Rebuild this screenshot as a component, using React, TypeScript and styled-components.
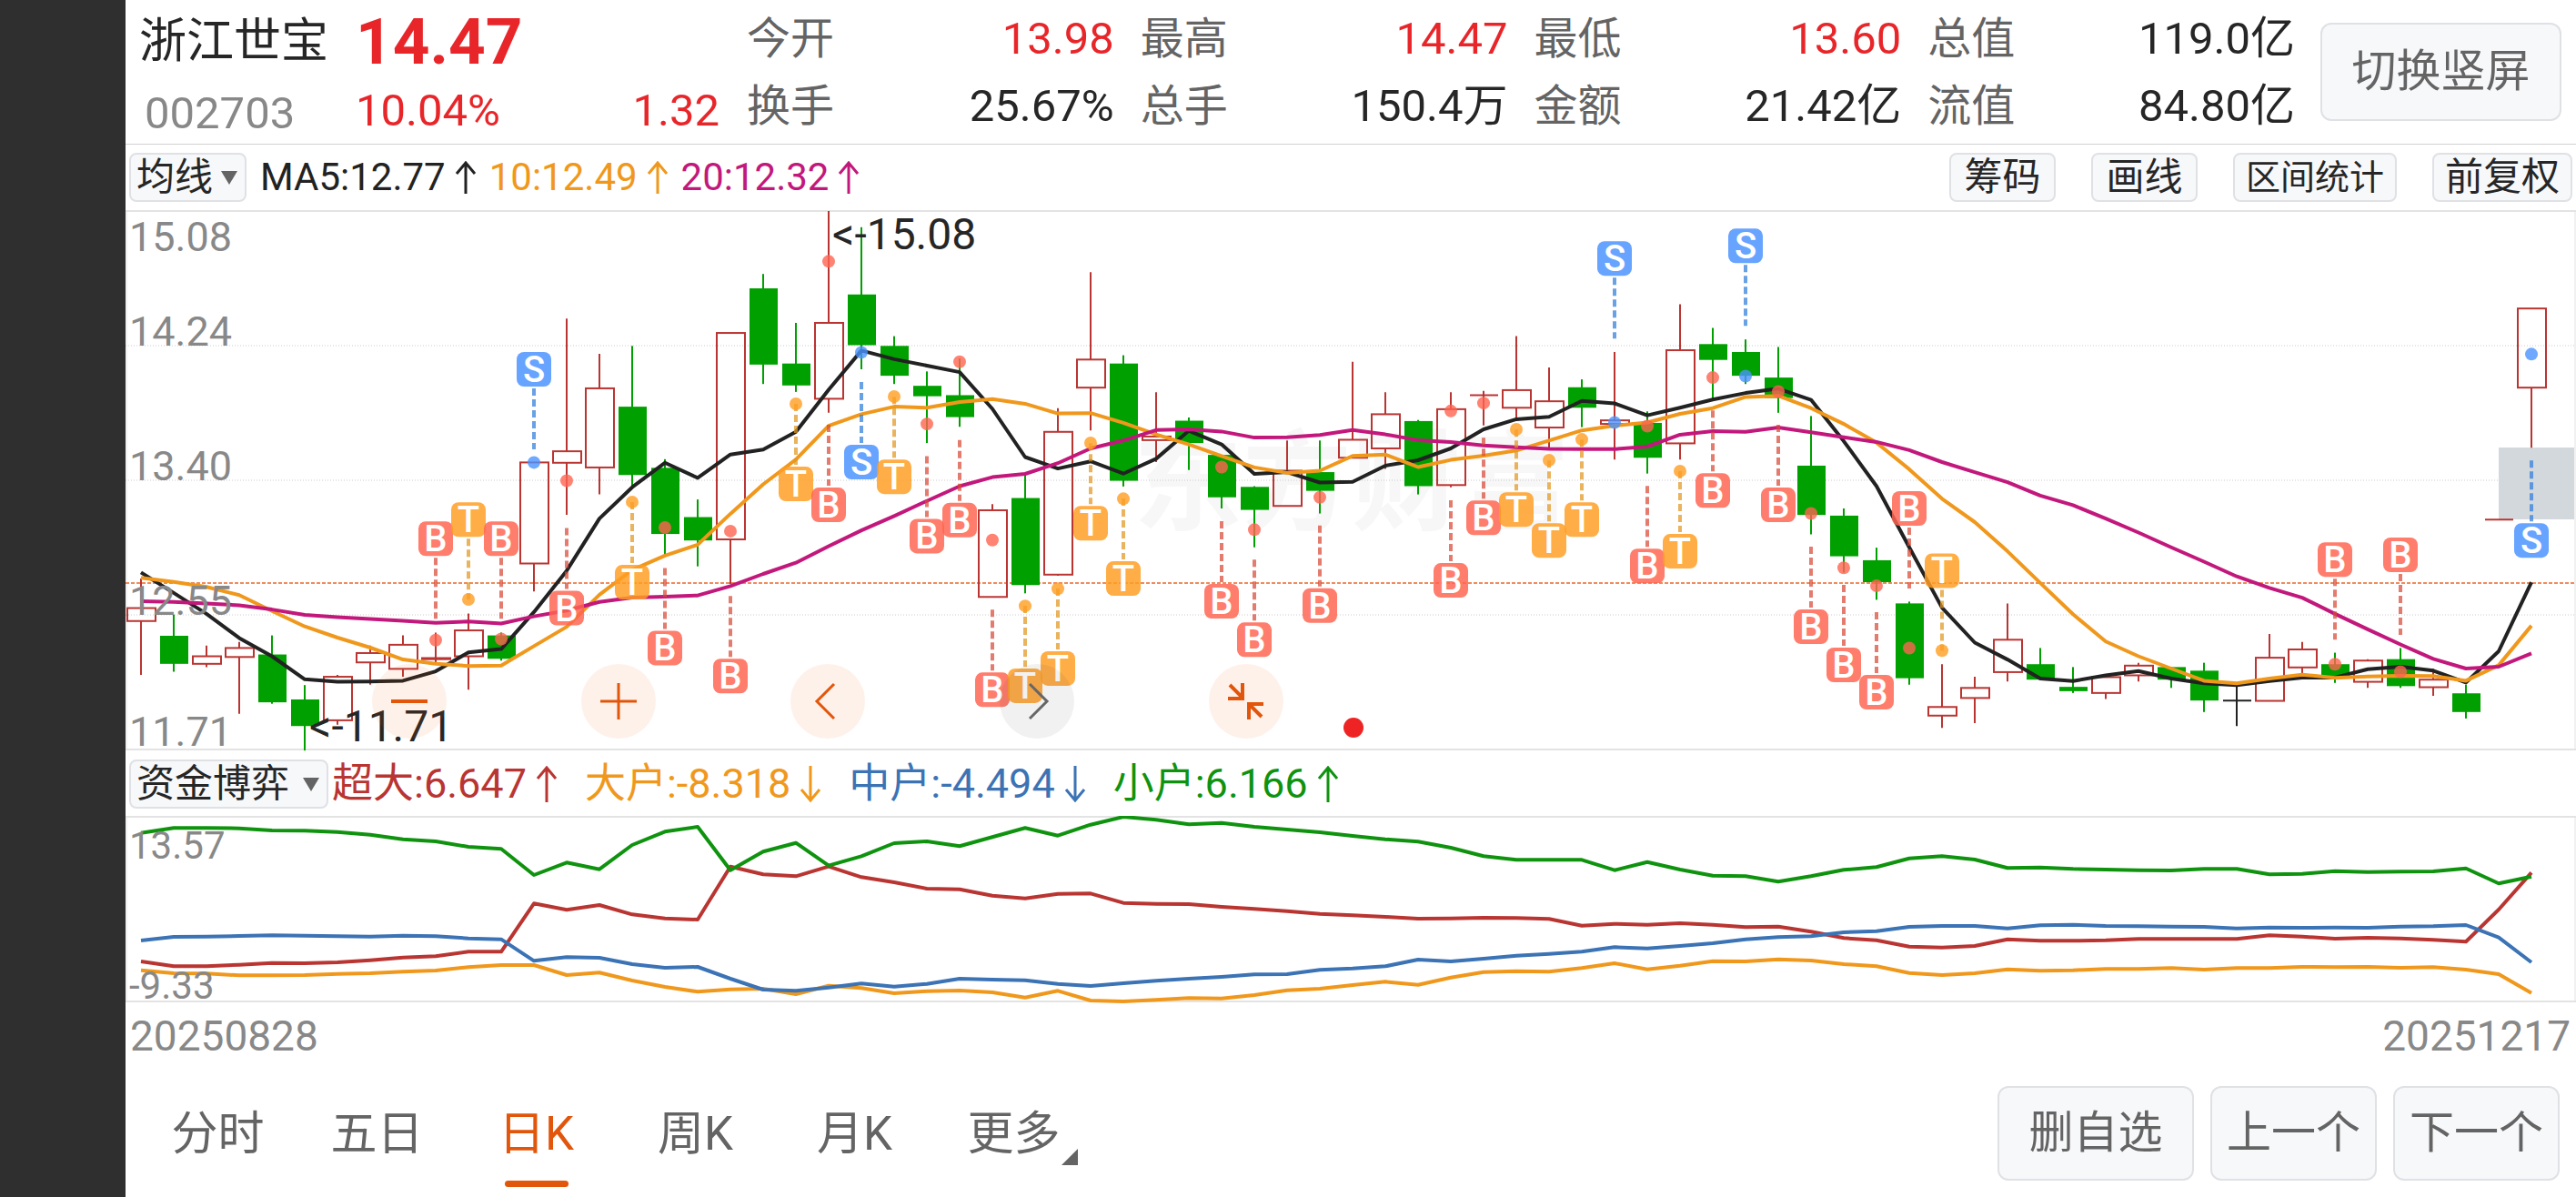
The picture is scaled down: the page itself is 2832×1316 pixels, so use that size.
import React, { useState } from 'react';
import styled, { createGlobalStyle } from 'styled-components';

const FONT = "Roboto, 'Noto Sans CJK SC', sans-serif";

const C = {
  ink: '#262626',
  mute: '#646464',
  axis: '#888888',
  red: '#e8262a',
  orange: '#e2560c',
  rule: '#e3e3e3',
  fill: '#f7f8fa',
  edge: '#dfe1e5',
  up: '#b93532',
  down: '#00a000',
  ma5: '#222222',
  ma10: '#f0981c',
  ma20: '#c2187c',
  blue: '#3b73b5',
  green: '#0f930f',
};

const GlobalStyle = createGlobalStyle`
  *, *::before, *::after { box-sizing: border-box; }
  body { margin: 0; background: #fff; font-family: ${FONT}; color: ${C.ink}; }
  button, select { font-family: inherit; margin: 0; cursor: pointer; }
`;

/* ---------- shell ---------- */

const Shell = styled.div`
  display: grid;
  grid-template-columns: 138px minmax(0, 1fr);
  min-height: 100vh;
`;
const Gutter = styled.div`
  background: #2f2f2f;
`;
const Main = styled.main`
  display: flex;
  flex-direction: column;
`;

/* ---------- header ---------- */

const Header = styled.header`
  display: flex;
  align-items: flex-start;
  padding: 6px 16px 0 15px;
  border-bottom: 1px solid #d2d2d2;
`;
const Identity = styled.div`
  display: grid;
  grid-template-columns: 238px minmax(0, 1fr);
  grid-template-rows: 80px 72px;
  align-items: center;
  width: 638px;
  flex: none;
`;
const Name = styled.h1`
  margin: 0;
  font-size: 52px;
  line-height: 76px;
  font-weight: 400;
`;
const Price = styled.strong`
  font-size: 71px;
  line-height: 76px;
  font-weight: 700;
  color: ${C.red};
`;
const Code = styled.span`
  padding: 6px 0 0 6px;
  font-size: 49px;
  line-height: 66px;
  color: ${C.axis};
`;
const Change = styled.div`
  display: flex;
  justify-content: space-between;
  font-size: 49px;
  line-height: 66px;
  color: ${C.red};
`;
const Quotes = styled.dl`
  flex: 1;
  display: grid;
  grid-template-columns: repeat(4, minmax(0, 1fr));
  column-gap: 29px;
  margin: 0 28px 0 30px;
`;
const Quote = styled.div`
  display: flex;
  justify-content: space-between;
  font-size: 48px;
  line-height: 74px;
  white-space: nowrap;
`;
const Term = styled.dt`
  color: ${C.mute};
`;
const Value = styled.dd<{ $up?: boolean }>`
  margin: 0;
  font-size: 49px;
  color: ${(p) => (p.$up ? C.red : C.ink)};
`;
const BigButton = styled.button<{ $width: number; $height: number }>`
  width: ${(p) => p.$width}px;
  height: ${(p) => p.$height}px;
  padding: 0;
  flex: none;
  border: 2px solid ${C.edge};
  border-radius: 12px;
  background: ${C.fill};
  color: ${C.mute};
  font-size: 49px;
  line-height: 72px;
  white-space: nowrap;
`;
const SwitchSlot = styled.div`
  padding-top: 19px;
`;

/* ---------- toolbars ---------- */

const Toolbar = styled.div`
  display: flex;
  align-items: center;
  height: 71px;
  padding: 0 4px;
`;
const Picker = styled.div`
  position: relative;
  flex: none;
`;
const PickerSelect = styled.select<{ $room: number }>`
  appearance: none;
  display: block;
  height: 54px;
  padding: 0 ${(p) => p.$room}px 0 6px;
  border: 2px solid ${C.edge};
  border-radius: 8px;
  background: ${C.fill};
  color: ${C.ink};
  font-size: 42px;
  line-height: 50px;
`;
const Caret = styled.svg`
  position: absolute;
  right: 10px;
  top: 20px;
  width: 18px;
  height: 15px;
  pointer-events: none;
`;
const Legend = styled.ul<{ $size: number; $gap: number; $lead: number }>`
  display: flex;
  gap: ${(p) => p.$gap}px;
  margin: 0 auto 0 0;
  padding: 0 0 0 ${(p) => p.$lead}px;
  list-style: none;
  font-size: ${(p) => p.$size}px;
  line-height: 54px;
  white-space: nowrap;
`;
const LegendItem = styled.li<{ $color: string }>`
  display: flex;
  align-items: center;
  gap: 10px;
  color: ${(p) => p.$color};
`;
const Tools = styled.div`
  display: flex;
  gap: 39px;
`;
const Tool = styled.button<{ $small?: boolean }>`
  min-width: 117px;
  height: 54px;
  padding: 0 12px;
  border: 2px solid ${C.edge};
  border-radius: 8px;
  background: ${C.fill};
  color: ${C.ink};
  font-size: ${(p) => (p.$small ? 38 : 42)}px;
  line-height: 50px;
  white-space: nowrap;
`;

/* ---------- charts ---------- */

const Plot = styled.section`
  position: relative;
`;
const Canvas = styled.svg`
  display: block;
  width: 100%;
  height: auto;
  font-family: ${FONT};
`;
const Controls = styled.div`
  position: absolute;
  left: 271px;
  bottom: 14px;
  display: flex;
  align-items: center;
  gap: 148px;
`;
const Round = styled.button<{ $idle?: boolean }>`
  display: grid;
  place-items: center;
  width: 82px;
  height: 82px;
  padding: 0;
  border: 0;
  border-radius: 50%;
  background: ${(p) => (p.$idle ? 'rgba(60, 60, 60, 0.07)' : 'rgba(245, 100, 20, 0.09)')};
  color: ${(p) => (p.$idle ? '#666666' : C.orange)};
`;
const Dates = styled.div`
  display: flex;
  justify-content: space-between;
  padding: 0 6px 0 5px;
  font-size: 46px;
  line-height: 72px;
  color: ${C.axis};
`;

/* ---------- footer ---------- */

const Footer = styled.footer`
  flex: 1;
  display: flex;
  align-items: center;
  justify-content: space-between;
  min-height: 141px;
  padding: 0 18px 0 14px;
`;
const Tabs = styled.nav`
  display: flex;
`;
const Tab = styled.button<{ $on: boolean }>`
  position: relative;
  width: 175px;
  height: 118px;
  padding: 2px 0 0;
  border: 0;
  background: none;
  color: ${(p) => (p.$on ? C.orange : C.mute)};
  font-size: 51px;
  line-height: 72px;
  &::after {
    content: '';
    position: absolute;
    left: 50%;
    bottom: 0;
    width: 70px;
    height: 7px;
    margin-left: -35px;
    border-radius: 4px;
    background: ${(p) => (p.$on ? C.orange : 'transparent')};
  }
`;
const Corner = styled.svg`
  position: absolute;
  right: 17px;
  bottom: 24px;
  width: 18px;
  height: 18px;
`;
const Actions = styled.div`
  display: flex;
  gap: 18px;
`;

/* ---------- data ---------- */

const quotes: { term: string; value: string; up?: boolean }[] = [
  { term: '今开', value: '13.98', up: true },
  { term: '最高', value: '14.47', up: true },
  { term: '最低', value: '13.60', up: true },
  { term: '总值', value: '119.0亿' },
  { term: '换手', value: '25.67%' },
  { term: '总手', value: '150.4万' },
  { term: '金额', value: '21.42亿' },
  { term: '流值', value: '84.80亿' },
];

type Kind = 'u' | 'd' | 'x';
/* kind, body top, body bottom, high, low: in axis ticks counted downwards */
const candles: [Kind, number, number, number, number][] = [
  ['u', 1134, 1170, 1052, 1320], ['d', 1211, 1289, 1152, 1311], ['u', 1268, 1289, 1238, 1298],
  ['u', 1245, 1270, 1228, 1428], ['d', 1263, 1396, 1210, 1400], ['d', 1388, 1462, 1348, 1530],
  ['u', 1325, 1446, 1320, 1458], ['u', 1259, 1285, 1238, 1347], ['u', 1236, 1303, 1210, 1325],
  ['u', 1273, 1276, 1202, 1285], ['u', 1196, 1268, 1149, 1361], ['d', 1210, 1275, 1202, 1280],
  ['u', 729, 1010, 729, 1088], ['u', 698, 730, 329, 875], ['u', 523, 743, 427, 818],
  ['d', 574, 764, 405, 800], ['d', 744, 928, 720, 988], ['d', 881, 946, 832, 1018],
  ['u', 369, 943, 369, 1067], ['d', 245, 457, 205, 511], ['d', 454, 515, 341, 533],
  ['u', 341, 552, 30, 591], ['d', 262, 403, 75, 470], ['d', 405, 488, 378, 511],
  ['d', 516, 545, 476, 675], ['d', 542, 603, 440, 630], ['u', 862, 1103, 845, 1103],
  ['d', 828, 1070, 765, 1093], ['u', 644, 1041, 578, 1044], ['u', 443, 521, 200, 640],
  ['d', 454, 780, 431, 796], ['u', 657, 667, 534, 728], ['d', 613, 675, 604, 750],
  ['d', 708, 826, 708, 857], ['d', 797, 861, 795, 965], ['u', 752, 850, 668, 850],
  ['d', 756, 808, 668, 871], ['u', 666, 716, 449, 716], ['u', 595, 690, 534, 747],
  ['d', 614, 795, 611, 818], ['u', 581, 792, 534, 798], ['u', 542, 542, 530, 626],
  ['u', 528, 577, 378, 605], ['u', 559, 632, 465, 688], ['d', 520, 577, 498, 631],
  ['u', 612, 622, 422, 721], ['d', 619, 716, 587, 760], ['u', 417, 676, 289, 721],
  ['d', 400, 444, 355, 552], ['d', 422, 488, 387, 511], ['d', 493, 550, 408, 591],
  ['d', 738, 875, 600, 929], ['d', 877, 990, 857, 1035], ['d', 1001, 1062, 966, 1111],
  ['d', 1121, 1329, 1116, 1347], ['u', 1409, 1433, 1290, 1467], ['u', 1356, 1384, 1325, 1454],
  ['u', 1222, 1312, 1121, 1338], ['d', 1290, 1333, 1245, 1333], ['d', 1353, 1365, 1298, 1370],
  ['u', 1326, 1370, 1320, 1387], ['u', 1294, 1321, 1286, 1338], ['d', 1298, 1333, 1298, 1356],
  ['d', 1308, 1391, 1286, 1423], ['x', 1391, 1391, 1350, 1462], ['u', 1272, 1392, 1206, 1392],
  ['u', 1249, 1299, 1228, 1320], ['d', 1290, 1325, 1258, 1342], ['u', 1280, 1339, 1276, 1356],
  ['d', 1276, 1351, 1245, 1356], ['u', 1333, 1354, 1303, 1378], ['d', 1371, 1423, 1347, 1441],
  ['u', 888, 888, 888, 888], ['u', 301, 521, 301, 688],
];

const ma5 = [
  1035, 1092, 1150, 1217, 1268, 1332, 1339, 1338, 1336, 1310, 1257, 1248, 1145, 1030, 885, 798, 730, 772, 707,
  693, 644, 527, 418, 442, 460, 478, 580, 714, 746, 726, 760, 719, 641, 679, 761, 756, 785, 783, 738, 723, 690,
  637, 609, 602, 558, 565, 598, 577, 554, 536, 524, 555, 670, 795, 965, 1133, 1230, 1277, 1330, 1337, 1321, 1309,
  1330, 1343, 1348, 1337, 1327, 1327, 1304, 1297, 1308, 1341, 1254, 1062,
];
const ma10 = [
  1050, 1061, 1075, 1098, 1142, 1185, 1216, 1244, 1277, 1289, 1295, 1294, 1240, 1186, 1097, 1028, 988, 958, 872,
  790, 721, 627, 595, 574, 577, 561, 553, 566, 593, 592, 619, 651, 679, 711, 743, 758, 752, 711, 707, 742, 722,
  710, 696, 668, 640, 627, 618, 594, 578, 547, 544, 578, 622, 674, 748, 830, 895, 976, 1064, 1151, 1227, 1268,
  1302, 1336, 1343, 1330, 1319, 1328, 1324, 1322, 1323, 1336, 1293, 1183,
];
const ma20 = [
  1115, 1117, 1121, 1126, 1138, 1153, 1159, 1164, 1169, 1175, 1171, 1177, 1157, 1141, 1117, 1105, 1102, 1099,
  1073, 1039, 1008, 962, 918, 878, 836, 795, 770, 761, 731, 690, 668, 639, 637, 643, 660, 659, 653, 639, 651, 667,
  672, 682, 687, 691, 692, 692, 685, 652, 642, 644, 632, 645, 659, 672, 695, 728, 756, 784, 821, 848, 885, 924,
  965, 1005, 1046, 1078, 1105, 1150, 1193, 1235, 1275, 1302, 1297, 1260,
];

type Mark = 'B' | 'S' | 'T';
/* candle index, mark, badge centre, dot centre, stem hangs below the badge */
const signals: [number, Mark, number, number, boolean?][] = [
  [9, 'B', 941, 1223, true], [10, 'T', 888, 1110, true], [11, 'B', 941, 1220, true], [12, 'S', 470, 729, true],
  [13, 'B', 1134, 780], [15, 'T', 1062, 839], [16, 'B', 1245, 910], [18, 'B', 1323, 920], [20, 'T', 789, 566],
  [21, 'B', 847, 170], [22, 'S', 728, 423], [23, 'T', 769, 546], [24, 'B', 934, 622], [25, 'B', 889, 449],
  [26, 'B', 1361, 945], [27, 'T', 1350, 1128], [28, 'T', 1302, 1080], [29, 'T', 898, 675], [30, 'T', 1052, 830],
  [33, 'B', 1115, 742], [34, 'B', 1222, 916], [36, 'B', 1127, 826], [40, 'B', 1057, 586], [41, 'B', 883, 564],
  [42, 'T', 860, 637], [43, 'T', 946, 723], [44, 'T', 888, 665], [45, 'S', 162, 618, true], [46, 'B', 1017, 628],
  [47, 'T', 976, 753], [48, 'B', 807, 493], [49, 'S', 127, 489, true], [50, 'B', 847, 532], [51, 'B', 1186, 871],
  [52, 'B', 1292, 1022], [53, 'B', 1368, 1072], [54, 'B', 857, 1245, true], [55, 'T', 1030, 1252, true],
  [67, 'B', 999, 1290, true], [69, 'B', 986, 1311, true], [73, 'S', 946, 428],
];
const markFill: Record<Mark, string> = { B: '#ff6450', T: '#ff9d22', S: '#4a93ff' };
const markStem: Record<Mark, string> = { B: '#d84a36', T: '#e2951f', S: '#2f7ddb' };

const small = [
  287, 271, 271, 272, 279, 280, 284, 293, 308, 315, 333, 340, 426, 385, 407, 327, 283, 267, 410, 349, 320, 395,
  364, 321, 315, 331, 301, 271, 296, 260, 234, 244, 259, 254, 267, 276, 285, 297, 308, 316, 336, 364, 376, 376,
  376, 410, 383, 408, 428, 430, 448, 430, 409, 400, 371, 364, 375, 403, 401, 406, 408, 410, 411, 406, 406, 424,
  422, 413, 416, 415, 414, 404, 454, 431,
];
const huge = [
  711, 727, 727, 722, 716, 717, 714, 707, 698, 694, 679, 679, 520, 541, 525, 556, 569, 573, 398, 424, 430, 398,
  433, 450, 471, 473, 494, 503, 488, 487, 518, 521, 522, 531, 538, 545, 554, 559, 564, 570, 569, 567, 568, 571,
  593, 587, 590, 585, 590, 598, 596, 613, 634, 641, 662, 665, 660, 638, 643, 643, 641, 637, 637, 637, 637, 625,
  629, 636, 633, 635, 640, 646, 540, 418,
];
const middle = [
  642, 630, 629, 627, 625, 626, 628, 629, 626, 628, 635, 638, 709, 697, 699, 720, 732, 729, 768, 804, 808, 797,
  784, 794, 785, 768, 771, 773, 785, 792, 783, 775, 768, 762, 754, 753, 739, 734, 727, 705, 711, 702, 692, 686,
  679, 664, 668, 660, 651, 638, 631, 628, 615, 611, 597, 594, 594, 602, 592, 590, 594, 595, 596, 597, 602, 599,
  600, 599, 600, 596, 595, 591, 632, 714,
];
const large = [
  740, 750, 751, 757, 757, 756, 752, 750, 745, 741, 730, 723, 723, 756, 748, 774, 795, 811, 803, 801, 819, 791,
  799, 816, 809, 807, 813, 830, 808, 840, 843, 838, 832, 833, 822, 806, 801, 789, 778, 788, 764, 746, 743, 745,
  733, 717, 737, 725, 710, 711, 704, 708, 720, 727, 749, 756, 750, 737, 742, 740, 736, 736, 733, 738, 733, 733,
  729, 730, 729, 732, 730, 738, 753, 815,
];

const STEP = 36;
const BODY = 31;
const W = 2694;
const xAt = (i: number) => 17 + STEP * i;
const priceY = (t: number) => 2 + (t - 30) / 2.529;
const flowY = (t: number) => 1 + (t - 234) / 3;
const polyline = (rows: number[], y: (t: number) => number) =>
  rows.map((t, i) => `${xAt(i)},${y(t).toFixed(1)}`).join(' ');

/* ---------- pieces ---------- */

function Arrow({ down, height }: { down?: boolean; height: number }) {
  const h = height;
  const d = down ? `M12 0V${h - 2}M2 ${h - 14}L12 ${h - 2}L22 ${h - 14}` : `M12 ${h}V2M2 14L12 2L22 14`;
  return (
    <svg width="24" height={h} viewBox={`0 0 24 ${h}`} fill="none" stroke="currentColor" strokeWidth="3" aria-hidden="true">
      <path d={d} />
    </svg>
  );
}

function Dropdown({ label, options, room }: { label: string; options: string[]; room: number }) {
  return (
    <Picker>
      <PickerSelect aria-label={label} $room={room}>
        {options.map((o) => (
          <option key={o}>{o}</option>
        ))}
      </PickerSelect>
      <Caret viewBox="0 0 18 15" aria-hidden="true">
        <path d="M0 0H18L9 15Z" fill={C.mute} />
      </Caret>
    </Picker>
  );
}

function Candle({ row, i }: { row: [Kind, number, number, number, number]; i: number }) {
  const [kind, top, bottom, high, low] = row;
  const x = xAt(i);
  const [t, b, h, l] = [top, bottom, high, low].map(priceY);
  if (kind === 'd') {
    return (
      <g fill={C.down}>
        <rect x={x - 1} y={h} width={2} height={l - h} />
        <rect x={x - 15} y={t} width={BODY} height={b - t} />
      </g>
    );
  }
  const color = kind === 'x' ? C.ma5 : C.up;
  if (top === bottom) {
    return (
      <path d={`M${x - 15} ${t}H${x + 16}M${x} ${h}V${l}`} stroke={color} strokeWidth={2} fill="none" />
    );
  }
  return (
    <g stroke={color} strokeWidth={2} fill="none">
      <path d={`M${x} ${h}V${t}M${x} ${b}V${l}`} />
      <rect x={x - 15} y={t} width={BODY} height={b - t} />
    </g>
  );
}

function Signal({ row }: { row: [number, Mark, number, number, boolean?] }) {
  const [i, mark, badge, dot, below] = row;
  const x = xAt(i);
  const y = priceY(badge);
  const from = below ? y + 21 : y - 88;
  return (
    <g>
      <path d={`M${x} ${from}v67`} stroke={markStem[mark]} strokeOpacity={0.72} strokeWidth={4} strokeDasharray="8 4" />
      <circle cx={x} cy={priceY(dot)} r={7} fill={markFill[mark]} fillOpacity={0.8} />
      <rect x={x - 19} y={y - 19} width={38} height={38} rx={8} fill={markFill[mark]} fillOpacity={0.84} />
      <text x={x} y={y + 14} fontSize={40} fontWeight={500} fill="#fff" textAnchor="middle">
        {mark}
      </text>
    </g>
  );
}

function PriceChart() {
  return (
    <Canvas viewBox={`0 0 ${W} 596`} role="img" aria-label="日K线图">
      <text x={1108} y={344} fontSize={120} fontWeight={700} fill="#f7f7f7">
        东方财富
      </text>
      <path d={`M0 2H${W}M0 594H${W}`} stroke={C.rule} strokeWidth={2} />
      <path d={`M1 2V594M${W - 1} 2V594`} stroke={C.rule} strokeWidth={1} />
      {[405, 779, 1154].map((t) => (
        <path key={t} d={`M0 ${Math.round(priceY(t))}H${W}`} stroke="#cccccc" strokeWidth={1} strokeDasharray="1 2" />
      ))}
      <path d={`M0 411H${W}`} stroke="#f08c5c" strokeWidth={2} strokeDasharray="4 2" />
      <rect x={2609} y={262} width={83} height={79} fill="#d3d8dd" />
      {candles.map((row, i) => (
        <Candle key={i} row={row} i={i} />
      ))}
      <g fill="none" strokeWidth={4} strokeLinejoin="round">
        <polyline points={polyline(ma5, priceY)} stroke={C.ma5} />
        <polyline points={polyline(ma10, priceY)} stroke={C.ma10} />
        <polyline points={polyline(ma20, priceY)} stroke={C.ma20} />
      </g>
      <g fontSize={45} fill={C.axis}>
        <text x={4} y={46}>15.08</text>
        <text x={4} y={150}>14.24</text>
        <text x={4} y={298}>13.40</text>
        <text x={4} y={446}>12.55</text>
        <text x={4} y={590}>11.71</text>
      </g>
      <g fontSize={48} fill={C.ink}>
        <text x={777} y={44}>{'<-15.08'}</text>
        <text x={202} y={585}>{'<-11.71'}</text>
      </g>
      {signals.map((row) => (
        <Signal key={row[0]} row={row} />
      ))}
      <circle cx={1350} cy={570} r={11} fill="#ee2424" />
    </Canvas>
  );
}

function FlowChart() {
  return (
    <Canvas viewBox={`0 0 ${W} 206`} role="img" aria-label="资金博弈走势">
      <path d={`M0 1H${W}M0 204H${W}`} stroke={C.rule} strokeWidth={2} />
      <path d={`M1 1V204M${W - 1} 1V204`} stroke={C.rule} strokeWidth={1} />
      <g fill="none" strokeWidth={4} strokeLinejoin="round">
        <polyline points={polyline(large, flowY)} stroke={C.ma10} />
        <polyline points={polyline(huge, flowY)} stroke={C.up} />
        <polyline points={polyline(middle, flowY)} stroke={C.blue} />
        <polyline points={polyline(small, flowY)} stroke={C.green} />
      </g>
      <g fontSize={42} fill={C.axis}>
        <text x={4} y={47}>13.57</text>
        <text x={4} y={201}>-9.33</text>
      </g>
    </Canvas>
  );
}

const icon = { width: 42, height: 42, viewBox: '0 0 42 42', fill: 'none', stroke: 'currentColor', strokeWidth: 4 };

const tabs = ['分时', '五日', '日K', '周K', '月K', '更多'];

export default function App() {
  const [tab, setTab] = useState('日K');
  return (
    <Shell>
      <GlobalStyle />
      <Gutter />
      <Main>
        <Header>
          <Identity>
            <Name>浙江世宝</Name>
            <Price>14.47</Price>
            <Code>002703</Code>
            <Change>
              <span>10.04%</span>
              <span>1.32</span>
            </Change>
          </Identity>
          <Quotes>
            {quotes.map((q) => (
              <Quote key={q.term}>
                <Term>{q.term}</Term>
                <Value $up={q.up}>{q.value}</Value>
              </Quote>
            ))}
          </Quotes>
          <SwitchSlot>
            <BigButton type="button" $width={265} $height={108}>切换竖屏</BigButton>
          </SwitchSlot>
        </Header>

        <Toolbar>
          <Dropdown label="主图指标" options={['均线']} room={34} />
          <Legend $size={42} $gap={14} $lead={15}>
            <LegendItem $color={C.ma5}>MA5:12.77<Arrow height={36} /></LegendItem>
            <LegendItem $color={C.ma10}>10:12.49<Arrow height={36} /></LegendItem>
            <LegendItem $color={C.ma20}>20:12.32<Arrow height={36} /></LegendItem>
          </Legend>
          <Tools>
            <Tool type="button">筹码</Tool>
            <Tool type="button">画线</Tool>
            <Tool type="button" $small>区间统计</Tool>
            <Tool type="button">前复权</Tool>
          </Tools>
        </Toolbar>

        <Plot>
          <PriceChart />
          <Controls>
            <Round type="button" aria-label="缩小">
              <svg {...icon}><path d="M1 21H41" /></svg>
            </Round>
            <Round type="button" aria-label="放大">
              <svg {...icon} strokeWidth={3}><path d="M1 21H41M21 1V41" /></svg>
            </Round>
            <Round type="button" aria-label="向前">
              <svg {...icon} strokeWidth={3}><path d="M28 2L9 21L28 40" /></svg>
            </Round>
            <Round type="button" aria-label="向后" $idle>
              <svg {...icon} strokeWidth={3}><path d="M13 2L32 21L13 40" /></svg>
            </Round>
            <Round type="button" aria-label="收起">
              <svg {...icon}><path d="M3 3L17 17M1 18H17V1M38 38L25 25M24 41V24H40" /></svg>
            </Round>
          </Controls>
        </Plot>

        <Toolbar>
          <Dropdown label="副图指标" options={['资金博弈']} room={40} />
          <Legend $size={45} $gap={30} $lead={4}>
            <LegendItem $color={C.up}>超大:6.647<Arrow height={40} /></LegendItem>
            <LegendItem $color={C.ma10}>大户:-8.318<Arrow down height={40} /></LegendItem>
            <LegendItem $color={C.blue}>中户:-4.494<Arrow down height={40} /></LegendItem>
            <LegendItem $color={C.green}>小户:6.166<Arrow height={40} /></LegendItem>
          </Legend>
        </Toolbar>

        <Plot>
          <FlowChart />
        </Plot>
        <Dates>
          <span>20250828</span>
          <span>20251217</span>
        </Dates>

        <Footer>
          <Tabs>
            {tabs.map((t) => (
              <Tab key={t} type="button" $on={t === tab} onClick={() => setTab(t)}>
                {t}
                {t === '更多' && (
                  <Corner viewBox="0 0 18 18" aria-hidden="true">
                    <path d="M18 0V18H0Z" fill={C.mute} />
                  </Corner>
                )}
              </Tab>
            ))}
          </Tabs>
          <Actions>
            <BigButton type="button" $width={216} $height={104}>删自选</BigButton>
            <BigButton type="button" $width={183} $height={104}>上一个</BigButton>
            <BigButton type="button" $width={183} $height={104}>下一个</BigButton>
          </Actions>
        </Footer>
      </Main>
    </Shell>
  );
}
